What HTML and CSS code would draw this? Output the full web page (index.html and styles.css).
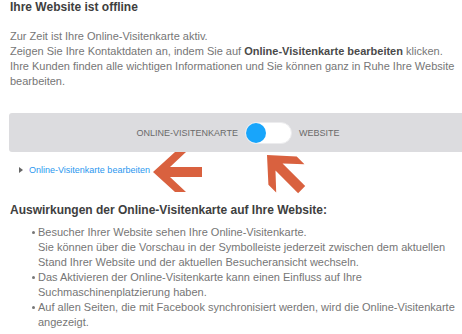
FILE: index.html
```html
<!DOCTYPE html>
<html lang="de">
<head>
    <meta charset="UTF-8">
    <meta name="viewport" content="width=device-width, initial-scale=1.0">
    <title>Online-Visitenkarte</title>
    <link rel="stylesheet" href="styles.css">
</head>
<body>
    <div class="page">
        <h1>Ihre Website ist offline</h1>
        <p class="intro">
            Zur Zeit ist Ihre Online-Visitenkarte aktiv.<br>
            Zeigen Sie Ihre Kontaktdaten an, indem Sie auf <strong>Online-Visitenkarte bearbeiten</strong> klicken.<br>
            Ihre Kunden finden alle wichtigen Informationen und Sie können ganz in Ruhe Ihre Website<br>
            bearbeiten.
        </p>

        <div class="switch-bar">
            <span class="switch-label">ONLINE-VISITENKARTE</span>
            <span class="toggle"><span class="knob"></span></span>
            <span class="switch-label">WEBSITE</span>
        </div>

        <div class="edit-row">
            <span class="caret"></span>
            <a href="#" class="edit-link">Online-Visitenkarte bearbeiten</a>
        </div>

        <h2>Auswirkungen der Online-Visitenkarte auf Ihre Website:</h2>
        <ul class="effects">
            <li>Besucher Ihrer Website sehen Ihre Online-Visitenkarte.<br>
                Sie können über die Vorschau in der Symbolleiste jederzeit zwischen dem aktuellen<br>
                Stand Ihrer Website und der aktuellen Besucheransicht wechseln.</li>
            <li>Das Aktivieren der Online-Visitenkarte kann einen Einfluss auf Ihre<br>
                Suchmaschinenplatzierung haben.</li>
            <li>Auf allen Seiten, die mit Facebook synchronisiert werden, wird die Online-Visitenkarte<br>
                angezeigt.</li>
        </ul>

        <!-- annotation arrows drawn over the screenshot -->
        <svg class="arrows" width="462" height="334" viewBox="0 0 462 334">
            <polygon points="0,0 22,-20 33,-20 17,-5 49,-5 49,5 17,5 33,20 22,20" transform="translate(153 172)" />
            <polygon points="0,0 22,-20 33,-20 17,-5 49,-5 49,5 17,5 33,20 22,20" transform="translate(267 155) rotate(45)" />
        </svg>
    </div>
</body>
</html>
```

FILE: styles.css
```css
html, body {
    margin: 0;
    padding: 0;
    background: #fff;
    overflow: hidden;
}
.page {
    position: relative;
    width: 462px;
    height: 334px;
    padding-left: 10px;
    box-sizing: border-box;
    font-family: "Liberation Sans", Arial, sans-serif;
    color: #767676;
}
h1 {
    margin: 0;
    font-size: 12px;
    line-height: 14px;
    color: #3e3e3e;
}
.intro {
    margin: 15px 0 0 0;
    font-size: 11px;
    line-height: 15px;
}
.intro strong {
    color: #4a4a4a;
}
.switch-bar {
    margin: 24px 0 0 -1px;
    width: 458px;
    height: 39px;
    background: #dcdcdf;
    border-radius: 3px;
    display: flex;
    align-items: center;
    justify-content: center;
    gap: 7px;
}
.switch-label {
    font-size: 9px;
    color: #6a6a6a;
}
.toggle {
    width: 45px;
    height: 20px;
    background: #fff;
    border: 1px solid #ececee;
    border-radius: 11px;
    display: flex;
    align-items: center;
}
.knob {
    width: 20px;
    height: 20px;
    border-radius: 50%;
    background: #18a5fb;
}
.edit-row {
    display: flex;
    align-items: center;
    gap: 6px;
    margin: 12px 0 0 9px;
    height: 12px;
}
.caret {
    width: 0;
    height: 0;
    border-top: 3px solid transparent;
    border-bottom: 3px solid transparent;
    border-left: 4px solid #666;
}
.edit-link {
    font-size: 9px;
    color: #2b98ef;
    text-decoration: none;
}
h2 {
    margin: 27px 0 0 0;
    font-size: 12px;
    line-height: 14px;
    color: #3e3e3e;
}
.effects {
    margin: 8px 0 0 0;
    padding-left: 28px;
    font-size: 11px;
    line-height: 15px;
    list-style: none;
}
.effects li {
    position: relative;
}
.effects li::before {
    content: "";
    position: absolute;
    left: -6px;
    top: 6px;
    width: 3px;
    height: 3px;
    border-radius: 50%;
    background: #777;
}
.arrows {
    position: absolute;
    left: 0;
    top: 0;
    fill: #d9613f;
    pointer-events: none;
}
```
